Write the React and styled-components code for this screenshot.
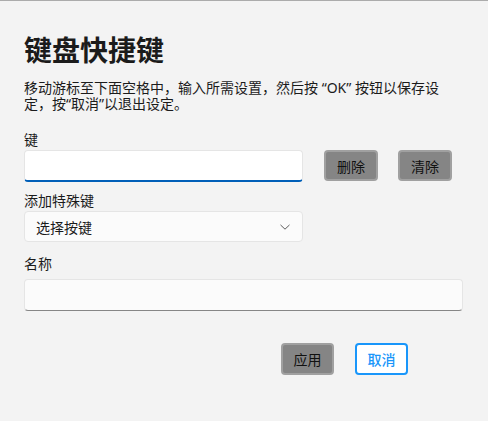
import React from "react";
import styled, { createGlobalStyle } from "styled-components";

const Global = createGlobalStyle`
  html, body { margin: 0; padding: 0; background: #f3f3f3; }
  body { font-family: "Noto Sans", "Noto Sans CJK SC", sans-serif; color: #1a1a1a; }
`;

const Page = styled.div`
  box-sizing: border-box;
  min-height: 100vh;
  background: #f3f3f3;
  border-top: 1px solid #ababab;
  padding: 30px 24px 0 24px;
  display: flex;
  flex-direction: column;
`;

const Title = styled.h1`
  margin: 0;
  font-size: 28px;
  line-height: 36px;
  font-weight: 700;
  color: #1b1b1b;
  font-family: "Noto Sans CJK SC", sans-serif;
`;

const Desc = styled.p`
  margin: 13px 0 0 0;
  max-width: 424px;
  font-size: 14px;
  line-height: 16px;
  color: #1b1b1b;
`;

const Label = styled.div`
  margin-top: ${(p) => p.$top}px;
  font-size: 14px;
  line-height: 20px;
  color: #1b1b1b;
`;

const Row = styled.div`
  display: flex;
  align-items: flex-start;
  gap: 20px;
`;

const TextBox = styled.div`
  box-sizing: border-box;
  width: ${(p) => p.$width};
  height: 32px;
  margin-top: ${(p) => p.$top || 0}px;
  border-radius: 4px;
  background: ${(p) => (p.$focused ? "#ffffff" : "#fbfbfb")};
  border: 1px solid #e5e5e5;
  border-bottom: ${(p) => (p.$focused ? "2px solid #005fb8" : "1px solid #868686")};
  margin-right: 1px;
`;

const Select = styled.div`
  box-sizing: border-box;
  width: 279px;
  height: 31px;
  border-radius: 4px;
  background: #fbfbfb;
  border: 1px solid #e5e5e5;
  display: flex;
  align-items: center;
  justify-content: space-between;
  padding: 0 11px 0 11px;
  font-size: 14px;
  color: #1b1b1b;
`;

const GrayButton = styled.button`
  box-sizing: border-box;
  width: ${(p) => p.$w}px;
  height: ${(p) => p.$h}px;
  border-radius: 4px;
  background: #858585;
  border: 2px solid #a0a0a0;
  color: #111;
  font-family: "Noto Sans CJK SC", sans-serif;
  font-size: 14px;
  padding: 0;
  display: flex;
  align-items: center;
  justify-content: center;
`;

const BlueButton = styled(GrayButton)`
  background: #ffffff;
  border: 2px solid #1996fa;
  color: #1996fa;
  font-weight: 500;
`;

const KeyButtons = styled.div`
  display: flex;
  gap: 20px;
`;

const Footer = styled.div`
  display: flex;
  justify-content: flex-end;
  gap: 21px;
  margin-top: 32px;
  padding-right: 56px;
`;

const Chevron = () => (
  <svg width="12" height="12" viewBox="0 0 12 12" fill="none">
    <path d="M1.8 4.2 L6 8.2 L10.2 4.2" stroke="#5c5c5c" strokeWidth="1" strokeLinecap="round" strokeLinejoin="round" />
  </svg>
);

export default function App() {
  return (
    <>
      <Global />
      <Page>
        <Title>键盘快捷键</Title>
        <Desc>移动游标至下面空格中，输入所需设置，然后按 “OK” 按钮以保存设定，按“取消”以退出设定。</Desc>
        <Label $top={18}>键</Label>
        <Row>
          <TextBox $width="279px" $focused />
          <KeyButtons>
            <GrayButton $w={54} $h={31}>删除</GrayButton>
            <GrayButton $w={54} $h={31}>清除</GrayButton>
          </KeyButtons>
        </Row>
        <Label $top={9}>添加特殊键</Label>
        <Select>
          <span>选择按键</span>
          <Chevron />
        </Select>
        <Label $top={12}>名称</Label>
        <TextBox $width="439px" $top={5} />
        <Footer>
          <GrayButton $w={53} $h={32}>应用</GrayButton>
          <BlueButton $w={53} $h={32}>取消</BlueButton>
        </Footer>
      </Page>
    </>
  );
}
